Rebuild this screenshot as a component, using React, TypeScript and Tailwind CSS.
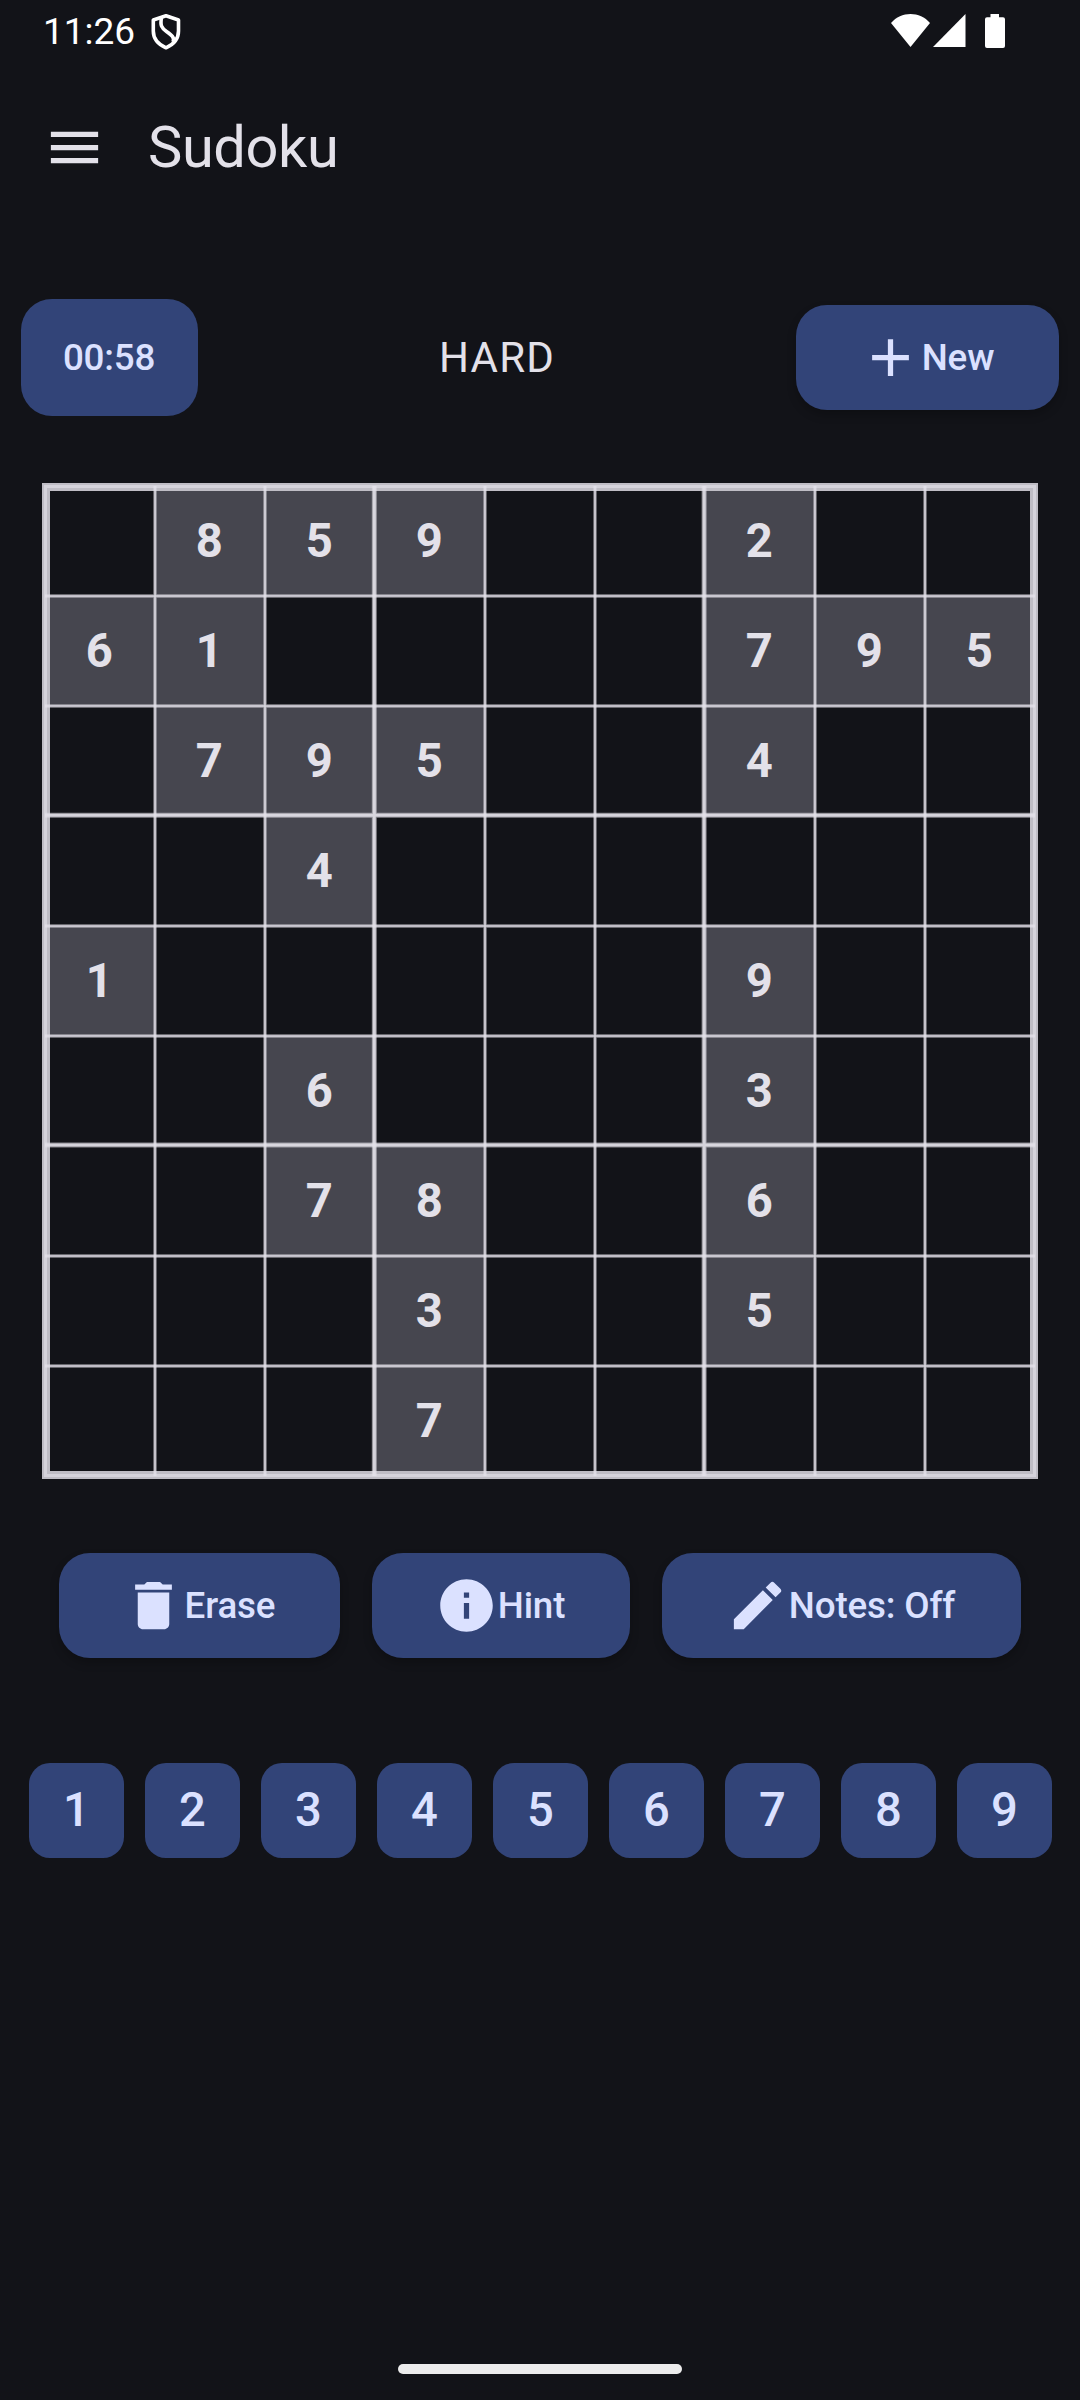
import React from "react";
import { MdDelete, MdInfo, MdEdit, MdAdd, MdMenu } from "react-icons/md";

const puzzle = [
  "085900200",
  "610000795",
  "079500400",
  "004000000",
  "100000900",
  "006000300",
  "007800600",
  "000300500",
  "000700000",
];

const digits = [1, 2, 3, 4, 5, 6, 7, 8, 9];
// Positions of the inner grid lines on the 996px board.
const lines = [113, 223, 332.3, 443, 553, 662.1, 773, 883];

function StatusBar() {
  return (
    <div className="flex h-[63px] items-start text-white">
      <span className="ml-[43px] mt-[10px] text-[37px] leading-[44px]">11:26</span>
      <svg className="ml-[15px] mt-[13px]" width="32" height="37" viewBox="0 0 32 37" fill="none" stroke="currentColor" strokeWidth="3.6" strokeLinejoin="round">
        <path d="M16 2.8 28.5 7v11c0 7.500-5 13.500-12.500 16.800C8.500 31.500 3.300 25.500 3.300 18V7z" />
        <path d="M11.500 4.500c-1.500 8 0 10.500 5 14s8.500 6 6.500 10.500" />
      </svg>
      <svg className="ml-auto mt-[14px]" width="39" height="33" viewBox="0 0 39 33" fill="currentColor">
        <path d="M0 9C10-3 29-3 39 9L19.500 33z" />
      </svg>
      <svg className="ml-[3px] mt-[14px]" width="33" height="33" viewBox="0 0 33 33" fill="currentColor">
        <path d="M32.500 0V33H0z" />
      </svg>
      <svg className="ml-[19px] mr-[75px] mt-[14px]" width="20" height="34" viewBox="0 0 20 34" fill="currentColor">
        <path d="M5.500 0h8.500v3.300h4q2 0 2 2V32q0 2-2 2H2q-2 0-2-2V5.300q0-2 2-2h3.500z" />
      </svg>
    </div>
  );
}

function Board() {
  return (
    <div className="relative mx-auto mt-[67px] h-[996px] w-[996px] shrink-0">
      <div className="grid h-full w-full grid-cols-[repeat(9,110px)] grid-rows-[repeat(9,110px)] p-[3px]">
        {puzzle.flatMap((row, r) =>
          row.split("").map((d, c) => (
            <div
              key={`${r}-${c}`}
              className={`flex items-center justify-center pr-[1.5px] pt-[1.5px] text-[47.2px] font-bold leading-none text-[#e3e1e9] ${d === "0" ? "" : "bg-[#46464f]"}`}
            >
              {d === "0" ? "" : d}
            </div>
          ))
        )}
      </div>
      <svg className="absolute inset-0" width="996" height="996" viewBox="0 0 996 996">
        <rect x="4" y="4" width="988" height="988" fill="none" stroke="#bfbdc5" strokeWidth="8" />
        <rect x="3.5" y="3.5" width="989" height="989" fill="none" stroke="#d5d3db" strokeWidth="3" />
        {lines.map((p, i) => {
          const d = `M${p} 3V993M3 ${p}H993`;
          const major = i % 3 === 2;
          return (
            <g key={p} fill="none" stroke="#e3e1e9">
              <path d={d} strokeOpacity="0.55" strokeWidth={major ? 5 : 3.4} />
              <path d={d} strokeOpacity="0.85" strokeWidth={major ? 3 : 1.6} />
            </g>
          );
        })}
      </svg>
    </div>
  );
}

const button =
  "flex h-[105px] items-center justify-center rounded-[31px] bg-[#324478] pr-[2px] text-[36.75px] font-medium tracking-[-0.15px] text-[#dbe1ff] shadow-[0_5px_10px_rgba(0,0,0,0.22)]";

export default function App() {
  return (
    <div className="flex h-[2400px] w-[1080px] flex-col overflow-hidden bg-[#121318] font-[Roboto,sans-serif] text-[#e3e1e9]">
      <StatusBar />
      <header className="flex h-[168px] items-center">
        <MdMenu className="ml-[43px] size-[63px]" />
        <h1 className="ml-[42px] pt-[2px] text-[57.75px] leading-none tracking-[-0.4px]">Sudoku</h1>
      </header>

      <div className="mt-[68px] flex h-[117px] items-center justify-between px-[21px]">
        <div className="flex h-[117px] w-[177px] items-center justify-center rounded-[31px] bg-[#324478] pr-[1px] text-[36.75px] font-medium tracking-[-0.2px] text-[#dbe1ff]">
          00:58
        </div>
        <div className="text-[42px] tracking-[1.2px]">HARD</div>
        <button className={`${button} w-[263px]`}>
          <MdAdd className="size-[63px]" />
          <span>New</span>
        </button>
      </div>

      <Board />

      <div className="mt-[74px] flex justify-center gap-[32px]">
        <button className={`${button} w-[281px]`}>
          <MdDelete className="size-[63px]" />
          <span>Erase</span>
        </button>
        <button className={`${button} w-[258px]`}>
          <MdInfo className="size-[63px]" />
          <span>Hint</span>
        </button>
        <button className={`${button} w-[359px]`}>
          <MdEdit className="size-[63px]" />
          <span>Notes: Off</span>
        </button>
      </div>

      <div className="mt-[105px] flex gap-[21px] pl-[29px]">
        {digits.map((d) => (
          <button key={d} className="flex size-[95px] items-center justify-center rounded-[21px] bg-[#324478] text-[47.2px] font-medium leading-none text-[#dbe1ff]">
            {d}
          </button>
        ))}
      </div>

      <div className="mx-auto mb-[26px] mt-auto h-[10px] w-[284px] rounded-full bg-[#ececec]" />
    </div>
  );
}
